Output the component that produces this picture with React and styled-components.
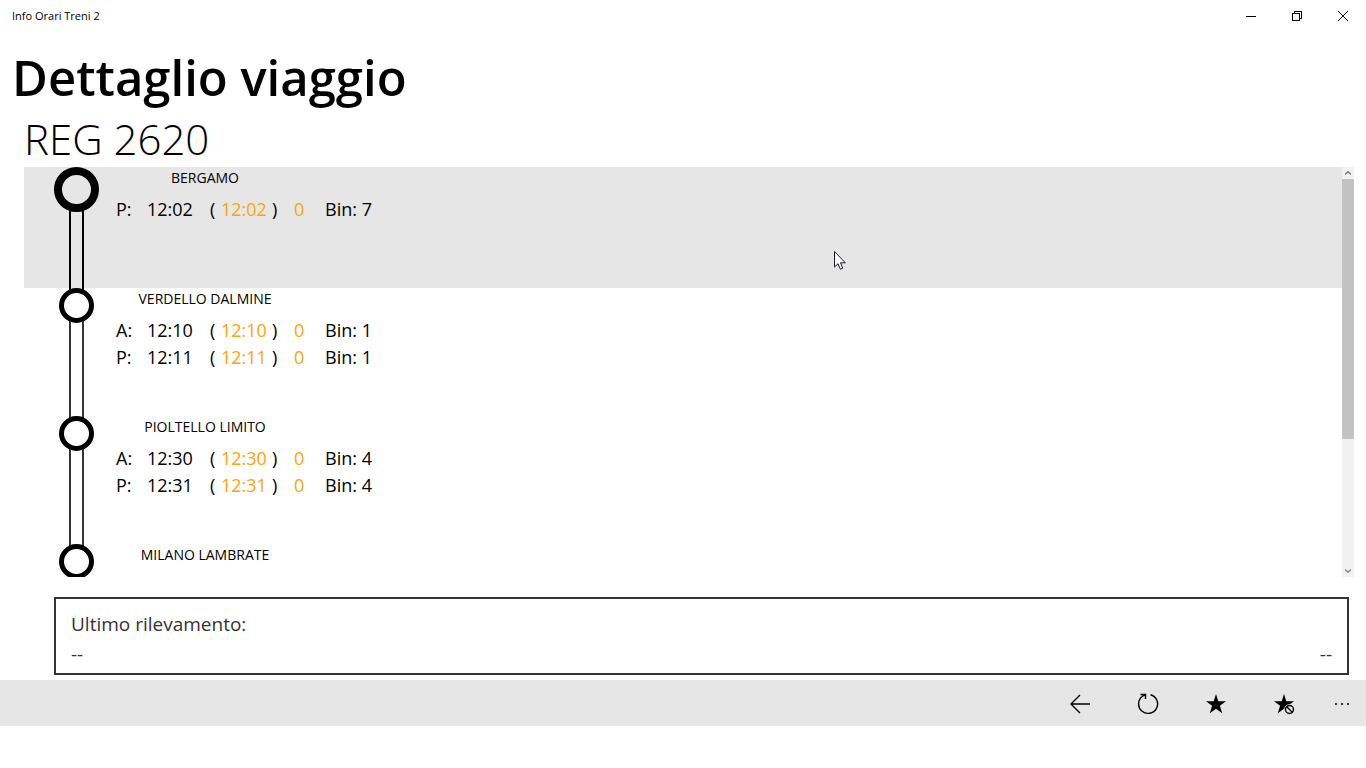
import styled, { createGlobalStyle } from "styled-components";

const stops = [
  {
    name: "BERGAMO",
    active: true,
    times: [{ kind: "P:", planned: "12:02", actual: "12:02", delay: 0, track: 7 }],
  },
  {
    name: "VERDELLO DALMINE",
    times: [
      { kind: "A:", planned: "12:10", actual: "12:10", delay: 0, track: 1 },
      { kind: "P:", planned: "12:11", actual: "12:11", delay: 0, track: 1 },
    ],
  },
  {
    name: "PIOLTELLO LIMITO",
    times: [
      { kind: "A:", planned: "12:30", actual: "12:30", delay: 0, track: 4 },
      { kind: "P:", planned: "12:31", actual: "12:31", delay: 0, track: 4 },
    ],
  },
  { name: "MILANO LAMBRATE", times: [] },
];

const STAR =
  "M10 0 L12.3 7.2 L20 7.3 L13.9 11.8 L16.2 19.2 L10 14.7 L3.8 19.2 L6.1 11.8 L0 7.3 L7.7 7.2 Z";

const Stop = ({ stop }) => (
  <StopRow $active={stop.active}>
    <Rail>
      <Ring $active={stop.active} />
      <Line $active={stop.active} />
    </Rail>
    <div>
      <StopName>{stop.name}</StopName>
      {stop.times.length > 0 && (
        <Times aria-label={stop.name}>
          <colgroup>
            <Col $width={31} />
            <Col $width={63} />
            <Col $width={11} />
            <Col $width={51} />
            <Col $width={22} />
            <Col $width={31} />
            <Col $width={80} />
          </colgroup>
          <tbody>
            {stop.times.map((time, i) => (
              <tr key={i}>
                <Cell>{time.kind}</Cell>
                <Cell>{time.planned}</Cell>
                <Cell>(</Cell>
                <Cell $live>{time.actual}</Cell>
                <Cell>)</Cell>
                <Cell $live>{time.delay}</Cell>
                <Cell>Bin: {time.track}</Cell>
              </tr>
            ))}
          </tbody>
        </Times>
      )}
    </div>
  </StopRow>
);

export default function App() {
  return (
    <Page>
      <GlobalStyle />
      <TitleBar>
        <AppName>Info Orari Treni 2</AppName>
        <WindowButton aria-label="Riduci">
          <svg width="10" height="10" shapeRendering="crispEdges">
            <path d="M0 5.5H10" stroke="#000" />
          </svg>
        </WindowButton>
        <WindowButton aria-label="Ripristina">
          <svg width="10" height="10" fill="none" stroke="#000" shapeRendering="crispEdges">
            <path d="M0.5 2.5H7.5V9.5H0.5Z M2.5 2.5V0.5H9.5V7.5H7.5" />
          </svg>
        </WindowButton>
        <WindowButton aria-label="Chiudi">
          <svg width="10" height="10" stroke="#000">
            <path d="M0 0L10 10M10 0L0 10" />
          </svg>
        </WindowButton>
      </TitleBar>

      <Heading>Dettaglio viaggio</Heading>
      <Train>REG 2620</Train>

      <Journey>
        <Stops>
          {stops.map((stop) => (
            <Stop key={stop.name} stop={stop} />
          ))}
        </Stops>
        <ScrollBar>
          <Arrow>
            <svg width="6" height="4" fill="none" stroke="#777" strokeWidth="1.3">
              <path d="M0 3.5L3 0.7L6 3.5" />
            </svg>
          </Arrow>
          <Track>
            <Thumb />
          </Track>
          <Arrow>
            <svg width="6" height="4" fill="none" stroke="#888" strokeWidth="1.3">
              <path d="M0 0.5L3 3.3L6 0.5" />
            </svg>
          </Arrow>
        </ScrollBar>
      </Journey>

      <LastSeen>
        <div>Ultimo rilevamento:</div>
        <Readings>
          <span>--</span>
          <span>--</span>
        </Readings>
      </LastSeen>

      <CommandBar>
        <Command aria-label="Indietro">
          <svg width="20" height="20" fill="none" stroke="#000" strokeWidth="1.4">
            <path d="M20 10H1M10 1L1 10L10 19" />
          </svg>
        </Command>
        <Command aria-label="Aggiorna">
          <svg width="22" height="22" fill="none" stroke="#000" strokeWidth="1.4">
            <path d="M13.5 1.7A9.5 9.5 0 1 1 5.5 3.2L8 1.8M3.5 1.5H8.5V6" />
          </svg>
        </Command>
        <Command aria-label="Aggiungi ai preferiti">
          <svg width="20" height="20">
            <path d={STAR} />
          </svg>
        </Command>
        <Command aria-label="Rimuovi dai preferiti">
          <svg width="20" height="20" overflow="visible">
            <path d={STAR} />
            <circle cx="15.5" cy="15.5" r="5.4" fill="#e6e6e6" />
            <circle cx="15.5" cy="15.5" r="4" fill="none" stroke="#000" strokeWidth="1.4" />
            <path d="M12.7 12.7L18.3 18.3" stroke="#000" strokeWidth="1.4" />
          </svg>
        </Command>
        <Command $narrow aria-label="Altro">
          <svg width="14" height="2" fill="#333" shapeRendering="crispEdges">
            <path d="M0 0h2v2h-2zM6 0h2v2h-2zM12 0h2v2h-2z" />
          </svg>
        </Command>
      </CommandBar>

      <Pointer width="14" height="21" viewBox="0 0 14 21">
        <path
          d="M1.5 1.5V17L5 13.7L7.4 19.2L9.8 18.2L7.5 12.8H12.3Z"
          fill="#fff"
          stroke="#1a1a2a"
        />
      </Pointer>
    </Page>
  );
}

const GlobalStyle = createGlobalStyle`
  * {
    box-sizing: border-box;
  }

  body {
    margin: 0;
    background: #fff;
    color: #000;
    font-family: "Open Sans", "Noto Sans", sans-serif;
  }

  button {
    display: flex;
    align-items: center;
    justify-content: center;
    padding: 0;
    border: 0;
    background: none;
  }
`;

const Page = styled.div`
  display: flex;
  flex-direction: column;
  height: 100vh;
  min-height: 480px;
  padding-bottom: 42px;
`;

const TitleBar = styled.header`
  display: flex;
  height: 32px;
  flex-shrink: 0;
`;

const AppName = styled.div`
  flex: 1;
  padding-left: 12px;
  font-size: 11px;
  line-height: 32px;
`;

const WindowButton = styled.button`
  width: 46px;
`;

const Heading = styled.h1`
  margin: 9px 0 0 12px;
  font-size: 49px;
  font-weight: 600;
  line-height: 72px;
`;

const Train = styled.h2`
  margin: 0 0 2px 24px;
  font-size: 42px;
  font-weight: 300;
  line-height: 52px;
`;

const Journey = styled.main`
  display: flex;
  flex: 1;
  min-height: 0;
  margin: 0 12px 0 24px;
`;

const Stops = styled.ul`
  flex: 1;
  margin: 0;
  padding: 0;
  list-style: none;
  overflow-y: auto;
  scrollbar-width: none;
`;

const StopRow = styled.li`
  display: flex;
  height: ${(props) => (props.$active ? "121px" : "128px")};
  padding-left: 30px;
  background: ${(props) => (props.$active ? "#e6e6e6" : "transparent")};
`;

const Rail = styled.div`
  display: flex;
  flex-direction: column;
  align-items: center;
  width: 45px;
  margin: 0 17px -3px 0;
`;

const Ring = styled.div`
  flex-shrink: 0;
  width: ${(props) => (props.$active ? "45px" : "35px")};
  height: ${(props) => (props.$active ? "45px" : "35px")};
  border: ${(props) => (props.$active ? "8px" : "5px")} solid #000;
  border-radius: 50%;
`;

const Line = styled.div`
  flex: 1;
  width: 15px;
  margin-top: -2px;
  border: solid ${(props) => (props.$active ? "#000" : "#333")};
  border-width: 0 2px;
`;

const StopName = styled.div`
  width: 178px;
  margin-bottom: 7px;
  font-size: 14px;
  line-height: 22px;
  text-align: center;
`;

const Times = styled.table`
  width: 289px;
  table-layout: fixed;
  border-collapse: collapse;
`;

const Col = styled.col`
  width: ${(props) => props.$width}px;
`;

const Cell = styled.td`
  padding: 0;
  color: ${(props) => (props.$live ? "#ffa500" : "#000")};
  font-size: 18px;
  line-height: 27px;
  white-space: nowrap;
`;

const ScrollBar = styled.div`
  display: flex;
  flex-direction: column;
  width: 12px;
  background: #f1f1f1;
`;

const Arrow = styled.div`
  display: flex;
  align-items: center;
  justify-content: center;
  height: 12px;
`;

const Track = styled.div`
  flex: 1;
`;

const Thumb = styled.div`
  height: 67.4%;
  background: #c2c2c2;
`;

const LastSeen = styled.section`
  margin: 20px 17px 5px 54px;
  padding: 10px 15px 4px;
  border: 2px solid #333;
  color: #333;
  font-size: 19px;
  line-height: 30px;
`;

const Readings = styled.div`
  display: flex;
  justify-content: space-between;
`;

const CommandBar = styled.nav`
  display: flex;
  justify-content: flex-end;
  height: 46px;
  flex-shrink: 0;
  background: #e6e6e6;
`;

const Command = styled.button`
  width: ${(props) => (props.$narrow ? "48px" : "68px")};
  height: 48px;
`;

const Pointer = styled.svg`
  position: absolute;
  left: 833px;
  top: 250px;
  pointer-events: none;
`;
